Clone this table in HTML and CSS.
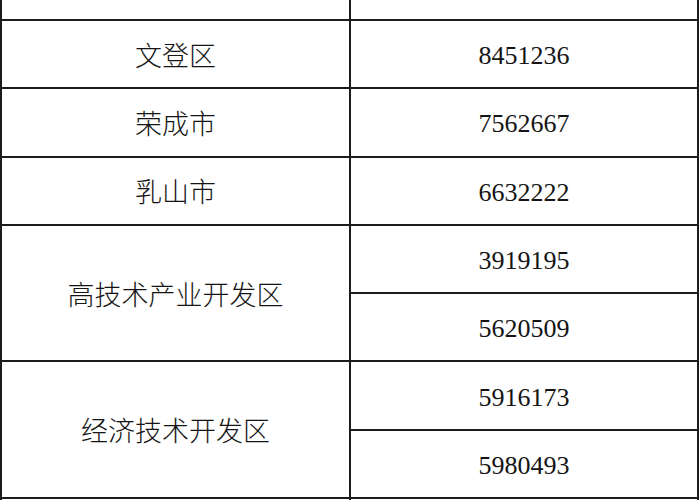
FILE: index.html
```html
<!DOCTYPE html>
<html lang="zh-CN">
<head>
<meta charset="utf-8">
<link rel="stylesheet" href="styles.css">
</head>
<body>
<table class="phones">
  <colgroup><col class="c-name"><col class="c-num"></colgroup>
  <tbody>
    <tr><td class="name">环翠区</td><td class="num">5233331</td></tr>
    <tr><td class="name">文登区</td><td class="num">8451236</td></tr>
    <tr><td class="name">荣成市</td><td class="num">7562667</td></tr>
    <tr><td class="name">乳山市</td><td class="num">6632222</td></tr>
    <tr><td class="name" rowspan="2">高技术产业开发区</td><td class="num">3919195</td></tr>
    <tr><td class="num">5620509</td></tr>
    <tr><td class="name" rowspan="2">经济技术开发区</td><td class="num">5916173</td></tr>
    <tr><td class="num">5980493</td></tr>
    <tr><td class="name"></td><td class="num"></td></tr>
  </tbody>
</table>
</body>
</html>
```
FILE: styles.css
```css
html, body {
  margin: 0;
  padding: 0;
  background: #ffffff;
  overflow: hidden;
}

.phones {
  table-layout: fixed;
  border-collapse: separate;
  border-spacing: 0;
  width: 699px;
  margin-top: -49.3px;
  border-left: 2px solid #1c1c1c;
  border-top: 2px solid #1c1c1c;
}

.c-name { width: 349px; }
.c-num { width: 348px; }

.phones tr { height: 68.29px; }

.phones td {
  padding: 0;
  text-align: center;
  vertical-align: middle;
  border-right: 2px solid #1c1c1c;
  border-bottom: 2px solid #1c1c1c;
  color: #141414;
}

.name {
  font-family: "Noto Sans CJK SC", "Noto Sans", sans-serif;
  font-size: 27px;
  font-weight: 300;
}

.phones td.num {
  font-family: "Liberation Serif", "DejaVu Serif", serif;
  font-size: 26px;
  padding-top: 4px;
}
```
